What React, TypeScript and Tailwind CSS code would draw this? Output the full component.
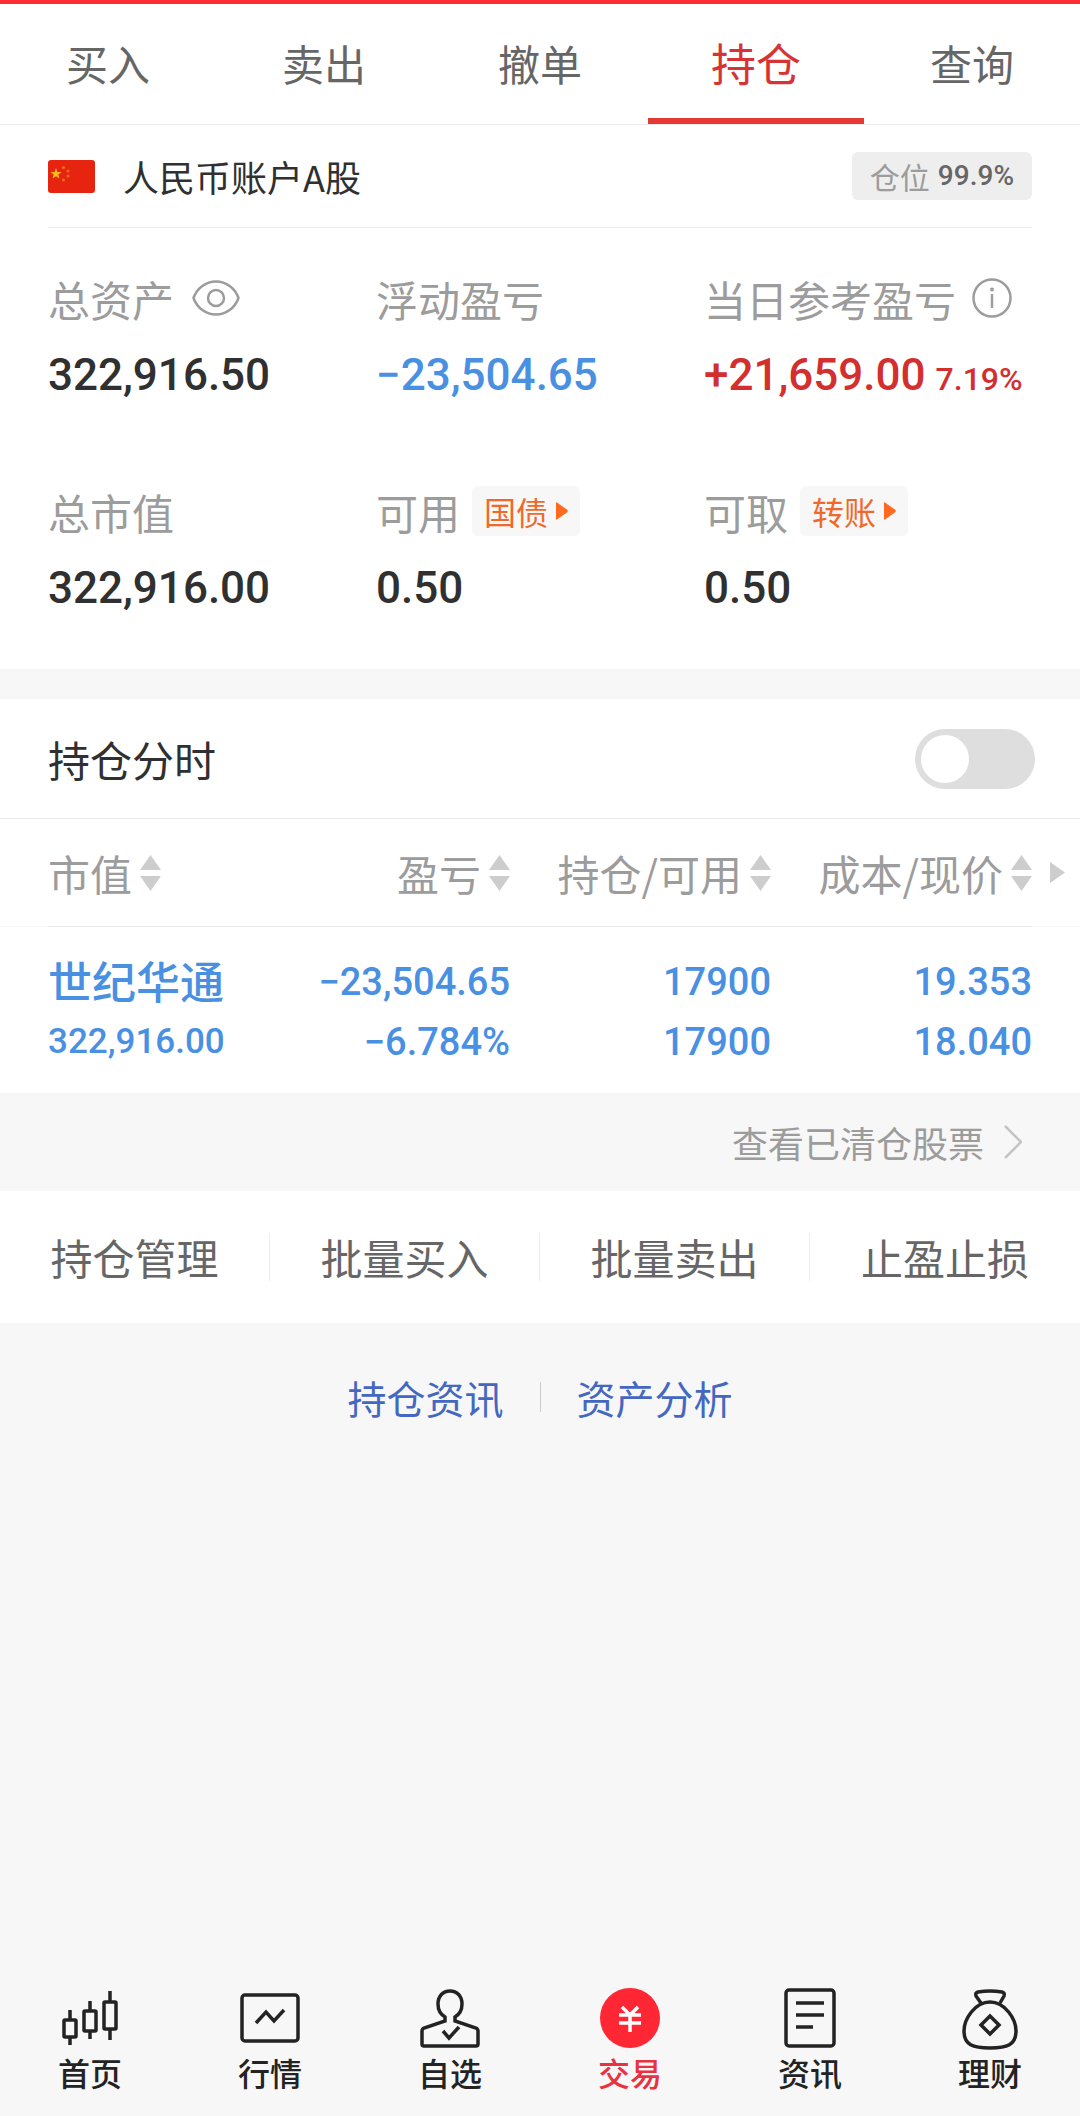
import { useState, ReactNode } from 'react';

type NavItem = {
  label: string;
  icon: ReactNode;
};

type Position = {
  name: string;
  marketValue: string;
  profit: string;
  profitRate: string;
  holding: string;
  available: string;
  cost: string;
  price: string;
};

const tabs = ['买入', '卖出', '撤单', '持仓', '查询'];
const columns = ['市值', '盈亏', '持仓/可用', '成本/现价'];
const actions = ['持仓管理', '批量买入', '批量卖出', '止盈止损'];

const positions: Position[] = [
  {
    name: '世纪华通',
    marketValue: '322,916.00',
    profit: '−23,504.65',
    profitRate: '−6.784%',
    holding: '17900',
    available: '17900',
    cost: '19.353',
    price: '18.040',
  },
];

const navItems: NavItem[] = [
  {
    label: '首页',
    icon: (
      <>
        <rect x="4" y="32" width="12" height="17" rx="1" />
        <path d="M10 22v10M10 49v8" />
        <rect x="24" y="23" width="12" height="20" rx="1" />
        <path d="M30 13v10M30 43v8" />
        <rect x="44" y="14" width="12" height="27" rx="1" />
        <path d="M50 3v11M50 41v11" />
      </>
    ),
  },
  {
    label: '行情',
    icon: (
      <>
        <rect x="2" y="7" width="56" height="46" rx="3" />
        <path d="M16 35l10-11 8 9 10-11" />
      </>
    ),
  },
  {
    label: '自选',
    icon: (
      <>
        <path d="M25 33V29C20 26 18 21 18 16C18 8 23 3 30 3S42 8 42 16C42 21 40 26 35 29V33L56 40Q58 41 58 43V56Q58 58 56 58H4Q2 58 2 56V43Q2 41 4 40Z" />
        <path d="M23 43l6 7 10-11" />
      </>
    ),
  },
  {
    label: '交易',
    icon: (
      <>
        <circle cx="30" cy="30" r="30" fill="#ff2733" stroke="none" />
        <path d="M22 19l8 8 8-8M19 27h22M19 35h22M30 27v17" stroke="#fff" />
      </>
    ),
  },
  {
    label: '资讯',
    icon: (
      <>
        <rect x="6" y="2" width="48" height="56" rx="3" />
        <path d="M16 15h28M16 27h28M16 39h17" />
      </>
    ),
  },
  {
    label: '理财',
    icon: (
      <>
        <path d="M21 15L16 8Q15 5 18 4Q30 2 42 4Q45 5 44 8L40 15" />
        <path d="M30 14C45 14 56 31 56 43C56 57 47 60 30 60S4 57 4 43C4 31 15 14 30 14Z" />
        <path d="M30 28l9 9-9 9-9-9z" />
      </>
    ),
  },
];

const FlagIcon = () => (
  <svg viewBox="0 0 47 33" className="h-[33px] w-[47px]" aria-hidden="true">
    <rect width="47" height="33" rx="3" fill="#e6240f" />
    <path d="M8 8l1.400 4 4.200.1-3.300 2.500 1.200 4L8 16.200l-3.500 2.400 1.200-4-3.300-2.500 4.200-.1z" fill="#fdbb15" />
    <g fill="#ef6a1c">
      <circle cx="15.500" cy="7.500" r="1.600" />
      <circle cx="20" cy="11" r="1.600" />
      <circle cx="20" cy="16" r="1.600" />
      <circle cx="15.500" cy="20" r="1.600" />
    </g>
  </svg>
);

const EyeIcon = () => (
  <svg viewBox="0 0 48 36" className="h-9 w-12" fill="none" stroke="#9c9c9c" strokeWidth="2.500" aria-hidden="true">
    <path d="M1.500 18C5 8 14 1.500 24 1.500S43 8 46.500 18C43 28 34 34.500 24 34.500S5 28 1.500 18Z" />
    <circle cx="24" cy="18" r="8" />
  </svg>
);

const InfoIcon = () => (
  <svg viewBox="0 0 40 40" className="size-10" fill="none" stroke="#9c9c9c" strokeWidth="2.500" aria-hidden="true">
    <circle cx="20" cy="20" r="18.500" />
    <path d="M20 16v14" />
    <circle cx="20" cy="11.500" r="2" fill="#9c9c9c" stroke="none" />
  </svg>
);

const SortIcon = () => (
  <svg viewBox="0 0 21 36" className="h-9 w-[21px]" fill="#cdcdcd" aria-hidden="true">
    <path d="M10.500 0L21 15H0zM10.500 36L0 21h21z" />
  </svg>
);

const TagButton = ({ label }: { label: string }) => (
  <button className="ml-3 flex h-[50px] items-center gap-2 rounded-md bg-[#f7f7f7] px-3 text-[32px] text-[#f0692a]">
    {label}
    <svg viewBox="0 0 12 18" className="h-[18px] w-3" fill="#ff6a1f" aria-hidden="true">
      <path d="M0 1Q0 0 1 0.500L11.500 8Q12 9 11.500 10L1 17.500Q0 18 0 17z" />
    </svg>
  </button>
);

type StatProps = {
  label: string;
  value: string;
  extra?: ReactNode;
  rate?: string;
  color?: string;
};

const Stat = ({ label, value, extra, rate, color = 'text-[#303030]' }: StatProps) => (
  <div className="whitespace-nowrap">
    <div className="flex h-14 items-center text-[42px] text-[#9c9c9c]">
      {label}
      {extra}
    </div>
    <div className={`mt-5 flex h-14 items-baseline gap-2.5 font-[Roboto,sans-serif] text-[44px] leading-[58px] font-medium ${color}`}>
      {value}
      {rate && <span className="text-[32px]">{rate}</span>}
    </div>
  </div>
);

const App = () => {
  const [activeTab, setActiveTab] = useState('持仓');
  const [activeNav, setActiveNav] = useState('交易');
  const [timeline, setTimeline] = useState(false);

  return (
    <div className="flex min-h-screen flex-col border-t-4 border-[#fb2d33] bg-[#f7f7f7] font-['Noto_Sans_CJK_SC',sans-serif]">
      <nav className="grid grid-cols-5 border-b border-[#ececec] bg-white">
        {tabs.map((tab) => (
          <button
            key={tab}
            onClick={() => setActiveTab(tab)}
            className={
              tab === activeTab
                ? 'h-[120px] border-b-6 border-[#e53935] pt-1 text-[45px] text-[#d63434]'
                : 'h-[120px] border-b-6 border-transparent pt-0.5 text-[42px] text-[#666666]'
            }
          >
            {tab}
          </button>
        ))}
      </nav>

      <section className="bg-white px-12 pb-[54px]">
        <div className="flex h-[103px] items-center border-b border-[#ececec]">
          <FlagIcon />
          <h1 className="ml-7 text-[36px] text-[#303030]">人民币账户A股</h1>
          <div className="ml-auto flex h-12 items-center gap-2 rounded-md bg-[#eeeeee] px-[18px] text-[30px] text-[#9c9c9c]">
            仓位
            <span className="font-[Roboto,sans-serif] text-[28px] font-medium text-[#666666]">99.9%</span>
          </div>
        </div>
        <div className="grid grid-cols-3 gap-y-[81px] pt-[42px]">
          <Stat
            label="总资产"
            value="322,916.50"
            extra={
              <button aria-label="隐藏资产" className="ml-[18px]">
                <EyeIcon />
              </button>
            }
          />
          <Stat label="浮动盈亏" value="−23,504.65" color="text-[#4a90e2]" />
          <Stat
            label="当日参考盈亏"
            value="+21,659.00"
            rate="7.19%"
            color="text-[#d32f2f]"
            extra={
              <button aria-label="说明" className="ml-4">
                <InfoIcon />
              </button>
            }
          />
          <Stat label="总市值" value="322,916.00" />
          <Stat label="可用" value="0.50" extra={<TagButton label="国债" />} />
          <Stat label="可取" value="0.50" extra={<TagButton label="转账" />} />
        </div>
      </section>

      <section className="mt-[30px] bg-white">
        <div className="flex h-[120px] items-center justify-between border-b border-[#ececec] pr-[45px] pl-12">
          <label htmlFor="timeline" className="text-[42px] text-[#303030]">持仓分时</label>
          <input
            type="checkbox"
            id="timeline"
            role="switch"
            checked={timeline}
            onChange={(e) => setTimeline(e.target.checked)}
            className="h-[60px] w-[120px] appearance-none rounded-full bg-[#dedede] p-1.5 before:block before:size-12 before:rounded-full before:bg-white checked:bg-[#e53935] checked:before:ml-auto"
          />
        </div>

        <table className="w-full table-fixed border-separate border-spacing-0 whitespace-nowrap">
          <colgroup>
            <col className="w-12" />
            <col />
            <col className="w-[261px]" />
            <col className="w-[261px]" />
            <col className="w-[261px]" />
            <col className="w-12" />
          </colgroup>
          <thead>
            <tr className="h-[108px]">
              <td className="border-b border-[#f8f8f8]" />
              {columns.map((column) => (
                <th key={column} className="border-b border-[#ececec] p-0 text-right font-normal text-[#9c9c9c] first-of-type:text-left">
                  <button className="inline-flex items-center gap-2 align-middle text-[42px] leading-[60px]">
                    {column}
                    <SortIcon />
                  </button>
                </th>
              ))}
              <td className="border-b border-[#f8f8f8] pl-[18px]">
                <svg viewBox="0 0 15 21" className="h-[21px] w-[15px]" fill="#cdcdcd" aria-hidden="true">
                  <path d="M0 0L15 10.500L0 21z" />
                </svg>
              </td>
            </tr>
          </thead>
          <tbody>
            {positions.map((p) => (
              <tr key={p.name} className="h-[166px] text-right font-[Roboto,sans-serif] text-[38px] leading-[60px] font-medium text-[#4a90e2]">
                <td />
                <td className="pt-1 text-left">
                  <div className="font-['Noto_Sans_CJK_SC',sans-serif] text-[44px]">{p.name}</div>
                  <div className="text-[35px] leading-[64px]">{p.marketValue}</div>
                </td>
                <td className="pt-1">
                  <div>{p.profit}</div>
                  <div>{p.profitRate}</div>
                </td>
                <td className="pt-1">
                  <div>{p.holding}</div>
                  <div>{p.available}</div>
                </td>
                <td className="pt-1">
                  <div>{p.cost}</div>
                  <div>{p.price}</div>
                </td>
                <td />
              </tr>
            ))}
          </tbody>
        </table>
      </section>

      <a href="#cleared" className="flex h-[98px] items-center justify-end gap-5 pr-[58px] text-[36px] text-[#9c9c9c]">
        查看已清仓股票
        <svg viewBox="0 0 18 34" className="h-[34px] w-[18px]" fill="none" stroke="#c4c4c4" strokeWidth="2.500" aria-hidden="true">
          <path d="M1 1l16 16-16 16" />
        </svg>
      </a>

      <section className="grid grid-cols-4 divide-x divide-[#ececec] bg-white py-[42px]">
        {actions.map((action) => (
          <button key={action} className="h-12 text-[42px] leading-[48px] text-[#666666]">
            {action}
          </button>
        ))}
      </section>

      <div className="mt-11 flex items-center justify-center text-[39px] leading-[60px] text-[#4468c0]">
        <a href="#news" className="px-9">持仓资讯</a>
        <span className="h-[30px] w-px bg-[#cccccc]" />
        <a href="#analysis" className="px-9">资产分析</a>
      </div>

      <nav className="mt-auto grid grid-cols-6 pb-6">
        {navItems.map((item) => (
          <button
            key={item.label}
            onClick={() => setActiveNav(item.label)}
            className={
              item.label === activeNav
                ? 'flex flex-col items-center gap-0.5 text-[#e8323f]'
                : 'flex flex-col items-center gap-0.5 text-[#222322]'
            }
          >
            <svg viewBox="0 0 60 62" className="h-[62px] w-[60px]" fill="none" stroke="currentColor" strokeWidth="3.500" aria-hidden="true">
              {item.icon}
            </svg>
            <span className="text-[32px] leading-10 font-medium">{item.label}</span>
          </button>
        ))}
      </nav>
    </div>
  );
};

export default App;
